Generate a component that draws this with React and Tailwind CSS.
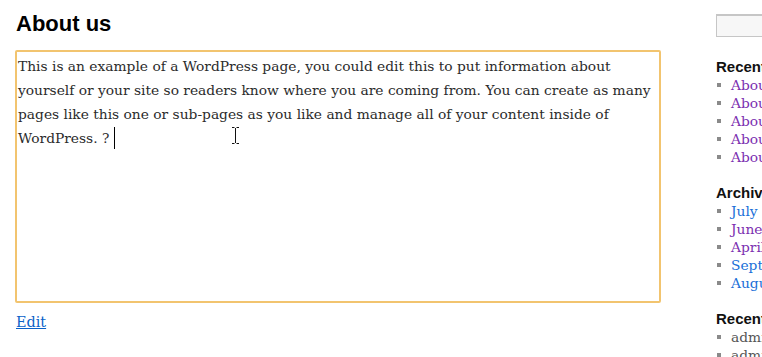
import React from 'react';

const recentPosts = ['About us', 'About us', 'About us', 'About us', 'About us'];
const archives = [
    { label: 'July 2012', color: 'text-[#1a6fd8]' },
    { label: 'June 2012', color: 'text-[#7b2fb0]' },
    { label: 'April 2012', color: 'text-[#7b2fb0]' },
    { label: 'September 2011', color: 'text-[#1a6fd8]' },
    { label: 'August 2011', color: 'text-[#1a6fd8]' },
];
const comments = ['admin on About us', 'admin on About us'];

function Bullet() {
    return <span className="w-[4px] h-[4px] bg-[#8a8a8a] shrink-0 mr-[10px] ml-[1px]"></span>;
}

function WidgetTitle({ children }) {
    return (
        <h3 className="font-['Liberation_Sans',Arial,sans-serif] font-bold text-[15px] leading-[18px] text-[#111] whitespace-nowrap">
            {children}
        </h3>
    );
}

export default function App() {
    return (
        <div className="relative w-[762px] h-[357px] overflow-hidden bg-white flex font-['DejaVu_Serif',Georgia,serif]">
            {/* main column */}
            <div className="ml-[15px] w-[646px] shrink-0 pt-[11px]">
                <h1 className="font-['Liberation_Sans',Arial,sans-serif] font-bold text-[22px] leading-[26px] text-black pl-[1px]">
                    About us
                </h1>
                <div className="mt-[13px] h-[253px] border-2 border-[#f2c46f] rounded-[2px] px-[1px] pt-[2px] text-[13.8px] leading-[24px] text-[#2b2b2b]">
                    This is an example of a WordPress page, you could edit this to put information about yourself or your site so readers know where you are coming from. You can create as many pages like this one or sub-pages as you like and manage all of your content inside of WordPress. ?{' '}
                    <span className="inline-block w-px h-[22px] bg-black align-[-6px]"></span>
                </div>
                <a href="#" className="inline-block mt-[8px] ml-[1px] text-[14.4px] leading-[22px] text-[#0a62c9] underline">
                    Edit
                </a>
            </div>

            {/* sidebar */}
            <div className="ml-[55px] w-[220px] shrink-0 pt-[14px]">
                <div className="h-[23px] w-[200px] border border-[#c6c6c6] border-t-2 bg-[#f7f7f7]"></div>

                <div className="mt-[21px]">
                    <WidgetTitle>Recent Posts</WidgetTitle>
                    <ul className="text-[13.8px] leading-[18px]">
                        {recentPosts.map((p, i) => (
                            <li key={i} className="flex items-center whitespace-nowrap text-[#7b2fb0]">
                                <Bullet />
                                <a href="#">{p}</a>
                            </li>
                        ))}
                    </ul>
                </div>

                <div className="mt-[18px]">
                    <WidgetTitle>Archives</WidgetTitle>
                    <ul className="text-[13.8px] leading-[18px]">
                        {archives.map((a) => (
                            <li key={a.label} className={`flex items-center whitespace-nowrap ${a.color}`}>
                                <Bullet />
                                <a href="#">{a.label}</a>
                            </li>
                        ))}
                    </ul>
                </div>

                <div className="mt-[18px]">
                    <WidgetTitle>Recent Comments</WidgetTitle>
                    <ul className="text-[13.8px] leading-[18px]">
                        {comments.map((c, i) => (
                            <li key={i} className="flex items-center whitespace-nowrap text-[#555]">
                                <Bullet />
                                <span>{c}</span>
                            </li>
                        ))}
                    </ul>
                </div>
            </div>

            {/* mouse I-beam cursor over the textarea */}
            <svg className="absolute left-[231px] top-[127px]" width="9" height="17" viewBox="0 0 9 17">
                <path d="M1 0.5h2.5M5.5 0.5H8M4.5 1v15M1 16.5h2.5M5.5 16.5H8" stroke="#111" strokeWidth="1" fill="none" />
            </svg>
        </div>
    );
}
